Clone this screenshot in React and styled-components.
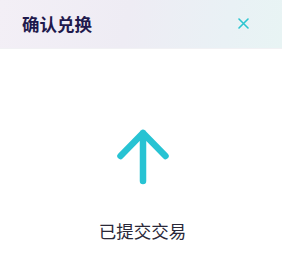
import React from "react";
import styled, { createGlobalStyle } from "styled-components";

const Global = createGlobalStyle`
  html, body { margin: 0; padding: 0; background: #ffffff; }
  body { font-family: "Noto Sans CJK SC", "Noto Sans", sans-serif; }
`;

const Panel = styled.div`
  width: 282px;
  height: 253px;
  background: #ffffff;
  display: flex;
  flex-direction: column;
  overflow: hidden;
`;

const Header = styled.div`
  height: 49px;
  box-sizing: border-box;
  display: flex;
  align-items: center;
  justify-content: space-between;
  padding: 0 33px 0 22px;
  background: linear-gradient(100deg, #f3eff6 0%, #eeecf4 45%, #e9f1f5 80%, #e8f4f4 100%);
  border-bottom: 1px solid #f1f1f4;
`;

const Title = styled.div`
  font-size: 17.5px;
  font-weight: 700;
  color: #1f1a4d;
  line-height: 1;
  margin-top: -1px;
`;

const Close = styled.button`
  border: none;
  background: transparent;
  padding: 0;
  width: 12px;
  height: 12px;
  display: flex;
  align-items: center;
  justify-content: center;
  cursor: pointer;
  margin-top: -1px;
`;

const Body = styled.div`
  flex: 1;
  display: flex;
  flex-direction: column;
  align-items: center;
  padding-top: 77px;
  padding-left: 3px;
`;

const Message = styled.div`
  margin-top: 34px;
  font-size: 17.5px;
  font-weight: 400;
  color: #2a2838;
  line-height: 1;
`;

export default function App() {
  return (
    <>
      <Global />
      <Panel>
        <Header>
          <Title>确认兑换</Title>
          <Close aria-label="close">
            <svg width="11" height="11" viewBox="0 0 11 11">
              <path d="M1 1 L10 10 M10 1 L1 10" stroke="#2cc5d0" strokeWidth="1.6" strokeLinecap="round" />
            </svg>
          </Close>
        </Header>
        <Body>
          <svg width="60" height="62" viewBox="0 0 60 62">
            <path
              d="M30 55 L30 7 M7.5 30 L30 7 L52.5 30"
              fill="none"
              stroke="#27c3d3"
              strokeWidth="6.5"
              strokeLinecap="round"
              strokeLinejoin="round"
            />
          </svg>
          <Message>已提交交易</Message>
        </Body>
      </Panel>
    </>
  );
}
